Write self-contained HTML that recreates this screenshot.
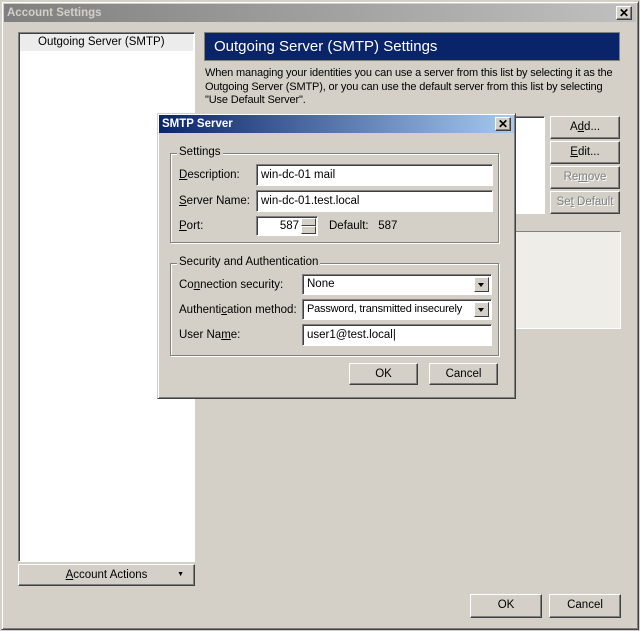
<!DOCTYPE html><html><head><style>
*{box-sizing:border-box}
body{margin:0;width:640px;height:631px;background:#d4d0c8;font-family:"Liberation Sans",sans-serif;font-size:11.5px;color:#000;position:relative;overflow:hidden}
.a{position:absolute}
.btn{position:absolute;background:#d4d0c8;border:1px solid;border-color:#fff #404040 #404040 #fff;box-shadow:inset -1px -1px 0 #808080;text-align:center;line-height:20px}
.sunk{position:absolute;background:#fff;border:1px solid;border-color:#808080 #fff #fff #808080;box-shadow:inset 1px 1px 0 #404040}
.grp{position:absolute;border:1px solid #808080;box-shadow:1px 1px 0 #fff, inset 1px 1px 0 #fff}
.grp span{position:absolute;top:-8px;left:6px;background:#d4d0c8;padding:0 2px}
.inp{position:absolute;background:#fff;border:1px solid;border-color:#808080 #fff #fff #808080;box-shadow:inset 1px 1px 0 #404040;padding-left:4px;line-height:19px;white-space:nowrap;overflow:hidden}
.dd{position:absolute;right:2px;top:2px;width:15px;bottom:2px;background:#d4d0c8;border:1px solid;border-color:#fff #404040 #404040 #fff}
.dd:after{content:"";position:absolute;left:3px;top:5px;border:3.5px solid transparent;border-top:4px solid #000}
.dis{color:#808080;text-shadow:1px 1px 0 #fff}
</style></head><body>
<div class="a" style="left:1px;top:1px;width:638px;height:629px;border:1px solid;border-color:#d4d0c8 #404040 #404040 #d4d0c8;box-shadow:inset 1px 1px 0 #fff,inset -1px -1px 0 #808080"></div>
<div class="a" style="left:4px;top:4px;width:632px;height:18px;background:linear-gradient(90deg,#808080,#c0c0c0);color:#d4d0c8;font-weight:bold;font-size:11.5px;line-height:18px;padding-left:3px">Account Settings</div>
<div class="btn" style="left:616px;top:6px;width:16px;height:14px;line-height:12px;font-weight:bold;font-size:12px">✕</div>

<div class="sunk" style="left:18px;top:32px;width:177px;height:530px"></div>
<div class="a" style="left:20px;top:34px;width:173px;height:17px;background:#ececec;padding-left:18px;line-height:16px">Outgoing Server (SMTP)</div>
<div class="btn" style="left:18px;top:564px;width:177px;height:22px"><u>A</u>ccount Actions<span style="position:absolute;right:10px;font-size:7px">▼</span></div>

<div class="a" style="left:204px;top:32px;width:416px;height:29px;background:#0a246a;border:1px solid #808080;color:#fff;font-size:15px;line-height:27px;padding-left:9px">Outgoing Server (SMTP) Settings</div>
<div class="a" style="left:205px;top:67px;white-space:nowrap;line-height:13.5px;font-size:11px;letter-spacing:-0.15px">When managing your identities you can use a server from this list by selecting it as the<br>Outgoing Server (SMTP), or you can use the default server from this list by selecting<br>"Use Default Server".</div>
<div class="sunk" style="left:205px;top:116px;width:340px;height:98px"></div>
<div class="btn" style="left:550px;top:116px;width:70px;height:23px">A<u>d</u>d...</div>
<div class="btn" style="left:550px;top:141px;width:70px;height:23px"><u>E</u>dit...</div>
<div class="btn dis" style="left:550px;top:166px;width:70px;height:23px">Re<u>m</u>ove</div>
<div class="btn dis" style="left:550px;top:191px;width:70px;height:23px">Se<u>t</u> Default</div>
<div class="a" style="left:505px;top:231px;width:116px;height:98px;background:#eeede8;border:1px solid;border-color:#808080 #fff #fff #808080"></div>
<div class="btn" style="left:470px;top:594px;width:72px;height:24px">OK</div>
<div class="btn" style="left:549px;top:594px;width:72px;height:24px">Cancel</div>

<div class="a" style="left:157px;top:113px;width:359px;height:286px;background:#d4d0c8;border:1px solid;border-color:#d4d0c8 #404040 #404040 #d4d0c8;box-shadow:inset 1px 1px 0 #fff,inset -1px -1px 0 #808080"></div>
<div class="a" style="left:159px;top:115px;width:355px;height:18px;background:linear-gradient(90deg,#0a246a,#a6caf0);color:#fff;font-weight:bold;line-height:18px;padding-left:3px">SMTP Server</div>
<div class="btn" style="left:495px;top:117px;width:16px;height:14px;line-height:12px;font-weight:bold;font-size:12px">✕</div>

<div class="grp" style="left:170px;top:153px;width:329px;height:90px"><span>Settings</span></div>
<div class="a" style="left:179px;top:169px"><u>D</u>escription:</div>
<div class="inp" style="left:256px;top:164px;width:237px;height:22px;line-height:20px">win-dc-01 mail</div>
<div class="a" style="left:179px;top:195px"><u>S</u>erver Name:</div>
<div class="inp" style="left:256px;top:190px;width:237px;height:22px;line-height:20px">win-dc-01.test.local</div>
<div class="a" style="left:179px;top:220px"><u>P</u>ort:</div>
<div class="inp" style="left:256px;top:216px;width:62px;height:20px;text-align:right;padding-right:18px">587</div>
<div class="a" style="left:301px;top:218px;width:15px;height:8px;background:#d4d0c8;border:1px solid;border-color:#fff #404040 #404040 #fff"></div>
<div class="a" style="left:301px;top:226px;width:15px;height:8px;background:#d4d0c8;border:1px solid;border-color:#fff #404040 #404040 #fff"></div>
<div class="a" style="left:329px;top:220px">Default:&nbsp;&nbsp;&nbsp;587</div>

<div class="grp" style="left:170px;top:263px;width:329px;height:93px"><span>Security and Authentication</span></div>
<div class="a" style="left:179px;top:279px">Co<u>n</u>nection security:</div>
<div class="inp" style="left:302px;top:274px;width:190px;height:21px">None<div class="dd"></div></div>
<div class="a" style="left:179px;top:304px">Authenti<u>c</u>ation method:</div>
<div class="inp" style="left:302px;top:299px;width:190px;height:21px;font-size:11px;letter-spacing:-0.2px">Password, transmitted insecurely<div class="dd"></div></div>
<div class="a" style="left:179px;top:329px">User Na<u>m</u>e:</div>
<div class="inp" style="left:302px;top:324px;width:190px;height:22px;line-height:20px">user1@test.local|</div>
<div class="btn" style="left:349px;top:363px;width:69px;height:22px">OK</div>
<div class="btn" style="left:429px;top:363px;width:69px;height:22px">Cancel</div>
</body></html>
